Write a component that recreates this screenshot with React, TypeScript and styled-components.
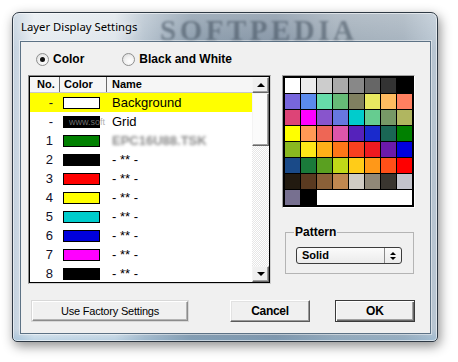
import React from "react";
import styled, { createGlobalStyle, css } from "styled-components";

const Global = createGlobalStyle`
  html, body { margin: 0; padding: 0; background: #ffffff; }
  body { font-family: "Liberation Sans", Arial, sans-serif; color: #000; }
  #root { width: 458px; height: 362px; overflow: hidden; }
`;

const Window = styled.div`
  position: relative;
  box-sizing: border-box;
  width: 426px;
  height: 330px;
  margin: 12px 0 0 12px;
  border: 1px solid #2e3944;
  border-radius: 7px 7px 5px 5px;
  background:
    linear-gradient(to top, rgba(110, 165, 205, 0.35), rgba(110, 165, 205, 0) 12px),
    linear-gradient(to bottom, rgba(255, 255, 255, 0.22), rgba(255, 255, 255, 0) 36px),
    linear-gradient(
      to right,
      #c3d1de 0%,
      #e6ecf1 5%,
      #dee5eb 24%,
      #b5c2ce 31%,
      #8a9bab 42%,
      #8393a4 62%,
      #9eabb7 76%,
      #a4b1bd 92%,
      #bac7d3 100%
    );
  box-shadow: 2px 4px 12px rgba(0, 0, 0, 0.45), inset 0 0 0 1px rgba(255, 255, 255, 0.55);
  display: flex;
  flex-direction: column;
`;

const TitleBar = styled.div`
  height: 28px;
  box-sizing: border-box;
  padding: 7px 0 0 8px;
  font-family: "Noto Sans", "Open Sans", sans-serif;
  font-size: 11.3px;
  line-height: 14px;
  color: #000;
  text-shadow: 0 0 6px rgba(255, 255, 255, 0.9);
`;

const Watermark = styled.span`
  position: absolute;
  left: 147px;
  top: 1px;
  font-family: "Liberation Serif", serif;
  font-weight: bold;
  font-size: 29px;
  letter-spacing: 3.5px;
  color: rgba(58, 72, 86, 0.5);
  filter: blur(1.2px);
  pointer-events: none;
`;

const Client = styled.div`
  box-sizing: border-box;
  width: 411px;
  height: 293px;
  margin-left: 7px;
  border: 1px solid #5d7285;
  box-shadow: 0 0 0 1px rgba(255, 255, 255, 0.45);
  background: #f0f0f0;
  padding-top: 11px;
  display: flex;
  flex-direction: column;
`;

const RadioRow = styled.div`
  display: flex;
  align-items: center;
  gap: 38px;
  padding-left: 15px;
  height: 13px;
`;

const RadioOption = styled.label`
  display: flex;
  align-items: center;
  gap: 4px;
  font-weight: bold;
  font-size: 12px;
  line-height: 13px;
`;

const RadioCircle = styled.span<{ $checked?: boolean }>`
  box-sizing: border-box;
  width: 13px;
  height: 13px;
  border-radius: 50%;
  border: 1px solid #8e8f8f;
  background: radial-gradient(circle at 60% 65%, #ffffff 0%, #f2f2f2 45%, #d4d4d4 100%);
  display: flex;
  align-items: center;
  justify-content: center;
  &::after {
    content: "";
    width: 5px;
    height: 5px;
    border-radius: 50%;
    background: ${(p) => (p.$checked ? "#111" : "transparent")};
  }
`;

const MainRow = styled.div`
  display: flex;
  align-items: flex-start;
  gap: 11px;
  margin-top: 9px;
  padding-left: 7px;
`;

const ListBox = styled.div`
  position: relative;
  box-sizing: border-box;
  width: 243px;
  height: 209px;
  border: 1px solid;
  border-color: #8a8a8a #cfcfcf #cfcfcf #8a8a8a;
  display: flex;
  overflow: hidden;
`;

const ListInner = styled.div`
  flex: 1;
  display: flex;
  border: 1px solid #000;
  background: #fff;
  overflow: hidden;
`;

const ListBody = styled.div`
  flex: 1;
  display: flex;
  flex-direction: column;
  overflow: hidden;
`;

const HeaderRow = styled.div`
  display: grid;
  grid-template-columns: 30px 47px 1fr;
  height: 16px;
  box-sizing: border-box;
  background: #f6f6f6;
  border-bottom: 1px solid #c8c8c8;
`;

const HeaderCell = styled.div<{ $pad: number; $divider?: boolean }>`
  font-weight: bold;
  font-size: 11px;
  line-height: 15px;
  padding-left: ${(p) => p.$pad}px;
  border-right: ${(p) => (p.$divider ? "1px solid #6a6a6a" : "none")};
`;

const Row = styled.div<{ $selected?: boolean }>`
  display: grid;
  grid-template-columns: 30px 47px 1fr;
  align-items: center;
  height: 19px;
  flex-shrink: 0;
  font-size: 13px;
  background: ${(p) => (p.$selected ? "#ffff00" : "transparent")};
`;

const NumCell = styled.div`
  text-align: right;
  padding-right: 7px;
  color: #10102a;
`;

const SwatchCell = styled.div`
  position: relative;
  padding-left: 3px;
  display: flex;
  align-items: center;
`;

const Swatch = styled.span<{ $color: string }>`
  box-sizing: border-box;
  width: 37px;
  height: 12px;
  border: 1px solid #000;
  background: ${(p) => p.$color};
`;

const NameCell = styled.div`
  padding-left: 5px;
  white-space: nowrap;
`;

const Blurred = styled.span`
  color: #8a8a8a;
  filter: blur(1.4px);
  font-weight: bold;
`;

const SiteMark = styled.span`
  position: absolute;
  left: 9px;
  top: 50%;
  transform: translateY(-50%);
  font-size: 9px;
  line-height: 10px;
  color: rgba(150, 150, 150, 0.75);
  pointer-events: none;
  white-space: nowrap;
`;

const ScrollBar = styled.div`
  width: 17px;
  display: flex;
  flex-direction: column;
  background: repeating-conic-gradient(#ffffff 0 25%, #e6e6e6 0 50%) 0 0 / 2px 2px;
`;

const raised = css`
  box-sizing: border-box;
  border: 1px solid;
  border-color: #f4f4f4 #696969 #696969 #f4f4f4;
  box-shadow: inset -1px -1px 0 #a0a0a0;
`;

const ScrollButton = styled.div`
  ${raised};
  height: 16px;
  background: #f0f0f0;
  display: flex;
  align-items: center;
  justify-content: center;
  flex-shrink: 0;
`;

const Thumb = styled.div`
  ${raised};
  height: 53px;
  background: #fbfbfb;
  flex-shrink: 0;
`;

const Track = styled.div`
  flex: 1;
`;

const Arrow = styled.span<{ $dir: "up" | "down"; $size?: number }>`
  width: 0;
  height: 0;
  border-left: ${(p) => p.$size ?? 4}px solid transparent;
  border-right: ${(p) => p.$size ?? 4}px solid transparent;
  ${(p) =>
    p.$dir === "up"
      ? css`border-bottom: ${(p.$size ?? 4)}px solid #000;`
      : css`border-top: ${(p.$size ?? 4)}px solid #000;`}
`;

const RightColumn = styled.div`
  display: flex;
  flex-direction: column;
`;

const PaletteFrame = styled.div`
  border: 1px solid;
  border-color: #a0a0a0 #ffffff #ffffff #a0a0a0;
`;

const PaletteGrid = styled.div`
  display: grid;
  grid-template-columns: repeat(8, 15px);
  grid-auto-rows: 15px;
  gap: 1px;
  padding: 2px;
  background: #000;
`;

const Cell = styled.div<{ $color: string }>`
  background: ${(p) => p.$color};
`;

const BlankCells = styled.div`
  grid-column: span 6;
  background: #fff;
`;

const Group = styled.fieldset`
  box-sizing: border-box;
  width: 129px;
  margin: 17px 0 0 3px;
  padding: 0 8px 9px 8px;
  border: 1px solid #b4b4b4;
  min-inline-size: 0;
`;

const GroupLegend = styled.legend`
  padding: 0 1px;
  font-weight: bold;
  font-size: 12px;
  line-height: 14px;
`;

const Select = styled.div`
  box-sizing: border-box;
  width: 106px;
  height: 17px;
  margin: 8px 0 0 2px;
  border: 1px solid #3c3c3c;
  border-radius: 3px;
  background: linear-gradient(#fbfbfb, #ebebeb);
  display: flex;
  align-items: stretch;
`;

const SelectText = styled.div`
  flex: 1;
  padding-left: 5px;
  font-weight: bold;
  font-size: 11px;
  line-height: 15px;
`;

const SelectArrows = styled.div`
  width: 16px;
  border-left: 1px solid #8a8a8a;
  display: flex;
  flex-direction: column;
  align-items: center;
  justify-content: center;
  gap: 2px;
`;

const ButtonRow = styled.div`
  display: flex;
  align-items: center;
  margin-top: 16px;
  padding-left: 11px;
`;

const Button = styled.button<{ $variant?: "plain" | "bold" | "default"; $w: number; $gap?: number }>`
  box-sizing: border-box;
  width: ${(p) => p.$w}px;
  height: ${(p) => (p.$variant === "plain" ? 20 : 22)}px;
  margin-left: ${(p) => p.$gap ?? 0}px;
  padding: 0;
  background: #f0f0f0;
  font-family: "Liberation Sans", Arial, sans-serif;
  color: #000;
  ${(p) =>
    p.$variant === "plain"
      ? css`
          font-size: 11px;
          letter-spacing: -0.2px;
          border: 1px solid;
          border-color: #ffffff #8c8c8c #8c8c8c #ffffff;
          box-shadow: inset -1px -1px 0 #b4b4b4;
          outline: 1px solid #d8d8d8;
        `
      : p.$variant === "default"
      ? css`
          font-size: 12px;
          font-weight: bold;
          border: 1px solid #3a3a3a;
          box-shadow: inset 1px 1px 0 #ffffff, inset -1px -1px 0 #696969, inset -2px -2px 0 #a0a0a0;
        `
      : css`
          font-size: 12px;
          font-weight: bold;
          letter-spacing: -0.3px;
          border: 1px solid;
          border-color: #ffffff #5a5a5a #5a5a5a #ffffff;
          box-shadow: inset -1px -1px 0 #9a9a9a, inset 1px 1px 0 #e2e2e2;
        `}
`;

const palette: string[][] = [
  ["#ffffff", "#ececec", "#cccccc", "#aaaaaa", "#888888", "#666666", "#333333", "#000000"],
  ["#7766dd", "#5b8bee", "#66ddaa", "#66bb77", "#808060", "#e8e860", "#ffbb60", "#ff8060"],
  ["#dd4477", "#ff00ff", "#8855cc", "#6677e0", "#00cccc", "#66cc90", "#779966", "#b0b660"],
  ["#ffff00", "#ff9955", "#ee6655", "#dd55aa", "#5522bb", "#1a2acc", "#1a6655", "#008000"],
  ["#8ab820", "#ffe818", "#ffb018", "#ff7718", "#f84020", "#ee1a20", "#6a1aaa", "#0000dd"],
  ["#1a4a88", "#1a7a3a", "#5aa020", "#c0d818", "#ffcc18", "#ff9818", "#ff5018", "#ff0000"],
  ["#221a10", "#5a3a20", "#8a6038", "#c08850", "#d0ccc4", "#908878", "#3a3630", "#c4c4cc"],
];

type Layer = { no: string; color: string; name: React.ReactNode; selected?: boolean; mark?: boolean };

const layers: Layer[] = [
  { no: "-", color: "#ffffff", name: "Background", selected: true },
  { no: "-", color: "#000000", name: "Grid", mark: true },
  { no: "1", color: "#008000", name: <Blurred>EPC16U88.TSK</Blurred> },
  { no: "2", color: "#000000", name: "- ** -" },
  { no: "3", color: "#ff0000", name: "- ** -" },
  { no: "4", color: "#ffff00", name: "- ** -" },
  { no: "5", color: "#00cccc", name: "- ** -" },
  { no: "6", color: "#0000dd", name: "- ** -" },
  { no: "7", color: "#ff00ff", name: "- ** -" },
  { no: "8", color: "#000000", name: "- ** -" },
];

export default function App() {
  return (
    <>
      <Global />
      <Window>
        <TitleBar>Layer Display Settings</TitleBar>
        <Watermark>SOFTPEDIA</Watermark>
        <Client>
          <RadioRow>
            <RadioOption>
              <RadioCircle $checked />
              Color
            </RadioOption>
            <RadioOption>
              <RadioCircle />
              Black and White
            </RadioOption>
          </RadioRow>
          <MainRow>
            <ListBox>
              <ListInner>
                <ListBody>
                  <HeaderRow>
                    <HeaderCell $pad={7} $divider>No.</HeaderCell>
                    <HeaderCell $pad={4} $divider>Color</HeaderCell>
                    <HeaderCell $pad={5}>Name</HeaderCell>
                  </HeaderRow>
                  {layers.map((l, i) => (
                    <Row key={i} $selected={l.selected}>
                      <NumCell>{l.no}</NumCell>
                      <SwatchCell>
                        <Swatch $color={l.color} />
                        {l.mark && <SiteMark>www.soft</SiteMark>}
                      </SwatchCell>
                      <NameCell>{l.name}</NameCell>
                    </Row>
                  ))}
                </ListBody>
                <ScrollBar>
                  <ScrollButton>
                    <Arrow $dir="up" />
                  </ScrollButton>
                  <Thumb />
                  <Track />
                  <ScrollButton>
                    <Arrow $dir="down" />
                  </ScrollButton>
                </ScrollBar>
              </ListInner>
            </ListBox>
            <RightColumn>
              <PaletteFrame>
                <PaletteGrid>
                  {palette.flat().map((c, i) => (
                    <Cell key={i} $color={c} />
                  ))}
                  <Cell $color="#777090" />
                  <Cell $color="#000000" />
                  <BlankCells />
                </PaletteGrid>
              </PaletteFrame>
              <Group>
                <GroupLegend>Pattern</GroupLegend>
                <Select>
                  <SelectText>Solid</SelectText>
                  <SelectArrows>
                    <Arrow $dir="up" $size={3} />
                    <Arrow $dir="down" $size={3} />
                  </SelectArrows>
                </Select>
              </Group>
            </RightColumn>
          </MainRow>
          <ButtonRow>
            <Button $variant="plain" $w={156}>Use Factory Settings</Button>
            <Button $variant="bold" $w={80} $gap={42}>Cancel</Button>
            <Button $variant="default" $w={80} $gap={25}>OK</Button>
          </ButtonRow>
        </Client>
      </Window>
    </>
  );
}
